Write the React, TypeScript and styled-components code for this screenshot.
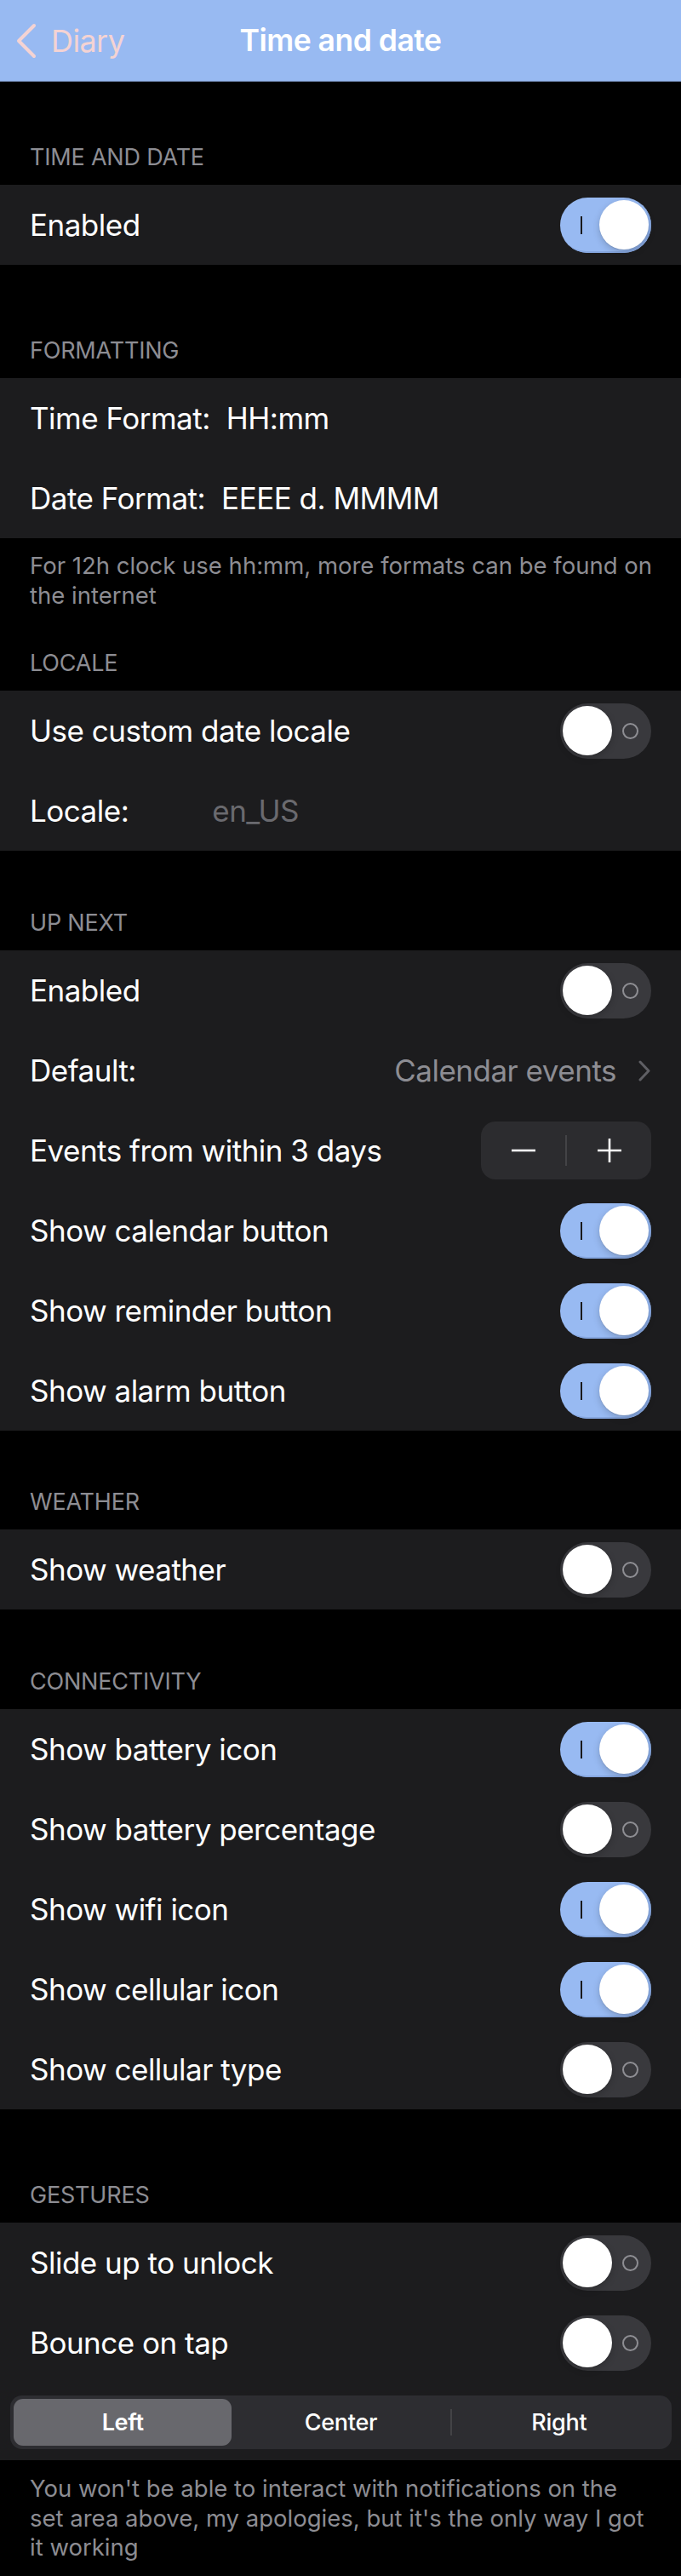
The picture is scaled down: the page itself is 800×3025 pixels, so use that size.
import React from "react";
import styled, { createGlobalStyle } from "styled-components";

const GlobalStyle = createGlobalStyle`
  html, body {
    margin: 0;
    padding: 0;
    background: #000;
  }
  body {
    font-family: Inter, "Liberation Sans", "Noto Sans", sans-serif;
    -webkit-font-smoothing: antialiased;
  }
`;

const accent = "#98baf2";
const muted = "#8d8d93";

const Page = styled.div`
  width: 800px;
  min-height: 3025px;
  background: #000;
  color: #fff;
`;

const NavBar = styled.header`
  height: 95px;
  background: ${accent};
  border-bottom: 1px solid #6d83aa;
  display: grid;
  grid-template-columns: 1fr auto 1fr;
  align-items: center;
`;

const BackButton = styled.div`
  display: flex;
  align-items: center;
  gap: 16px;
  padding-left: 18px;
  color: #f4d3d3;
  font-size: 36px;
  letter-spacing: -0.6px;
`;

const NavTitle = styled.h1`
  margin: 0;
  font-size: 35.5px;
  font-weight: 600;
  letter-spacing: -0.5px;
  color: #fff;
`;

const SectionHeader = styled.div<{ $space: number }>`
  padding: ${({ $space }) => $space}px 35px 15px;
  font-size: 27px;
  line-height: 34px;
  color: ${muted};
  text-transform: uppercase;
  letter-spacing: -0.2px;
`;

const Card = styled.section`
  background: #1c1c1e;
`;

const Row = styled.div`
  height: 94px;
  padding: 0 35px;
  display: flex;
  align-items: center;
  justify-content: space-between;
  font-size: 35px;
  letter-spacing: -0.5px;
`;

const Field = styled.div`
  display: flex;
  align-items: center;
`;

const FieldValue = styled.span<{ $gap: number; $placeholder?: boolean }>`
  margin-left: ${({ $gap }) => $gap}px;
  color: ${({ $placeholder }) => ($placeholder ? "#6a6a6f" : "#fff")};
`;

const Footnote = styled.p<{ $top: number }>`
  margin: 0;
  padding: ${({ $top }) => $top}px 28px 0 35px;
  font-size: 27.5px;
  line-height: 34.5px;
  color: ${muted};
`;

const Track = styled.span<{ $on: boolean }>`
  width: 107px;
  height: 65px;
  box-sizing: border-box;
  padding: 0 3px;
  border-radius: 33px;
  display: flex;
  flex-direction: ${({ $on }) => ($on ? "row-reverse" : "row")};
  align-items: center;
  background: ${({ $on }) => ($on ? accent : "#39393d")};
  box-shadow: ${({ $on }) => ($on ? "inset -2px -2px 0 #86a7e0" : "none")};
`;

const Thumb = styled.span`
  width: 58px;
  height: 58px;
  border-radius: 50%;
  background: #fff;
  box-shadow: 0 3px 8px rgba(0, 0, 0, 0.18), 0 1px 1px rgba(0, 0, 0, 0.1);
`;

const MarkSlot = styled.span`
  flex: 1;
  display: flex;
  justify-content: center;
  align-items: center;
`;

const OnMark = styled.span`
  width: 2px;
  height: 21px;
  background: #1a1a1c;
`;

const OffMark = styled.span`
  width: 19px;
  height: 19px;
  box-sizing: border-box;
  border: 2px solid #8e8e93;
  border-radius: 50%;
`;

const Toggle: React.FC<{ on?: boolean }> = ({ on = false }) => (
  <Track $on={on}>
    <Thumb />
    <MarkSlot>{on ? <OnMark /> : <OffMark />}</MarkSlot>
  </Track>
);

const Detail = styled.div`
  display: flex;
  align-items: center;
  gap: 25px;
  color: ${muted};
`;

// chevron drawn inside its own box, pointing left or right
const Chevron: React.FC<{
  color: string;
  width: number;
  height: number;
  stroke: number;
  back?: boolean;
}> = ({ color, width, height, stroke, back }) => {
  const near = stroke;
  const far = width - stroke;
  const [a, b] = back ? [far, near] : [near, far];
  return (
    <svg width={width} height={height} viewBox={`0 0 ${width} ${height}`} fill="none">
      <path
        d={`M${a} ${stroke} L${b} ${height / 2} L${a} ${height - stroke}`}
        stroke={color}
        strokeWidth={stroke}
        strokeLinecap="round"
        strokeLinejoin="round"
      />
    </svg>
  );
};

const Stepper = styled.div`
  width: 200px;
  height: 68px;
  border-radius: 17px;
  background: #2c2c2f;
  display: flex;
  align-items: center;
`;

const StepButton = styled.span`
  flex: 1;
  display: flex;
  justify-content: center;
  align-items: center;
`;

const StepDivider = styled.span`
  width: 2px;
  height: 36px;
  background: #434346;
`;

const SegmentArea = styled.div`
  padding: 15px 11px 13px 12px;
`;

const Segmented = styled.div`
  height: 63px;
  box-sizing: border-box;
  padding: 4px;
  border-radius: 14px;
  background: #2d2d31;
  display: grid;
  grid-template-columns: repeat(3, 1fr);
`;

const Segment = styled.span<{ $active?: boolean; $divider?: boolean }>`
  position: relative;
  display: flex;
  align-items: center;
  justify-content: center;
  border-radius: 11px;
  font-size: 27px;
  letter-spacing: -0.3px;
  font-weight: ${({ $active }) => ($active ? 600 : 500)};
  background: ${({ $active }) => ($active ? "#68686d" : "transparent")};

  &::before {
    content: "";
    display: ${({ $divider }) => ($divider ? "block" : "none")};
    position: absolute;
    left: 0;
    top: 12px;
    bottom: 12px;
    width: 2px;
    background: #434346;
  }
`;

const SwitchRow: React.FC<{ label: string; on?: boolean }> = ({ label, on }) => (
  <Row>
    <span>{label}</span>
    <Toggle on={on} />
  </Row>
);

export default function App() {
  return (
    <Page>
      <GlobalStyle />
      <NavBar>
        <BackButton>
          <Chevron color="#f4d3d3" width={26} height={44} stroke={4} back />
          <span>Diary</span>
        </BackButton>
        <NavTitle>Time and date</NavTitle>
        <div />
      </NavBar>

      <SectionHeader $space={72}>Time and date</SectionHeader>
      <Card>
        <SwitchRow label="Enabled" on />
      </Card>

      <SectionHeader $space={84}>Formatting</SectionHeader>
      <Card>
        <Row>
          <Field>
            <span>Time Format:</span>
            <FieldValue $gap={19}>HH:mm</FieldValue>
          </Field>
        </Row>
        <Row>
          <Field>
            <span>Date Format:</span>
            <FieldValue $gap={19}>EEEE d. MMMM</FieldValue>
          </Field>
        </Row>
      </Card>
      <Footnote $top={15}>
        For 12h clock use hh:mm, more formats can be found on the internet
      </Footnote>

      <SectionHeader $space={46}>Locale</SectionHeader>
      <Card>
        <SwitchRow label="Use custom date locale" />
        <Row>
          <Field>
            <span>Locale:</span>
            <FieldValue $gap={98} $placeholder>
              en_US
            </FieldValue>
          </Field>
        </Row>
      </Card>

      <SectionHeader $space={68}>Up next</SectionHeader>
      <Card>
        <SwitchRow label="Enabled" />
        <Row>
          <span>Default:</span>
          <Detail>
            <span>Calendar events</span>
            <Chevron color="#5f5f64" width={16} height={27} stroke={3} />
          </Detail>
        </Row>
        <Row>
          <span>Events from within 3 days</span>
          <Stepper>
            <StepButton>
              <svg width="30" height="30" viewBox="0 0 30 30">
                <path d="M1 15h28" stroke="#fff" strokeWidth="2.6" />
              </svg>
            </StepButton>
            <StepDivider />
            <StepButton>
              <svg width="30" height="30" viewBox="0 0 30 30">
                <path d="M1 15h28M15 1v28" stroke="#fff" strokeWidth="2.6" />
              </svg>
            </StepButton>
          </Stepper>
        </Row>
        <SwitchRow label="Show calendar button" on />
        <SwitchRow label="Show reminder button" on />
        <SwitchRow label="Show alarm button" on />
      </Card>

      <SectionHeader $space={67}>Weather</SectionHeader>
      <Card>
        <SwitchRow label="Show weather" />
      </Card>

      <SectionHeader $space={68}>Connectivity</SectionHeader>
      <Card>
        <SwitchRow label="Show battery icon" on />
        <SwitchRow label="Show battery percentage" />
        <SwitchRow label="Show wifi icon" on />
        <SwitchRow label="Show cellular icon" on />
        <SwitchRow label="Show cellular type" />
      </Card>

      <SectionHeader $space={84}>Gestures</SectionHeader>
      <Card>
        <SwitchRow label="Slide up to unlock" />
        <SwitchRow label="Bounce on tap" />
        <SegmentArea>
          <Segmented>
            <Segment $active>Left</Segment>
            <Segment>Center</Segment>
            <Segment $divider>Right</Segment>
          </Segmented>
        </SegmentArea>
      </Card>
      <Footnote $top={16}>
        You won't be able to interact with notifications on the
        <br />
        set area above, my apologies, but it's the only way I got it working
      </Footnote>
    </Page>
  );
}
